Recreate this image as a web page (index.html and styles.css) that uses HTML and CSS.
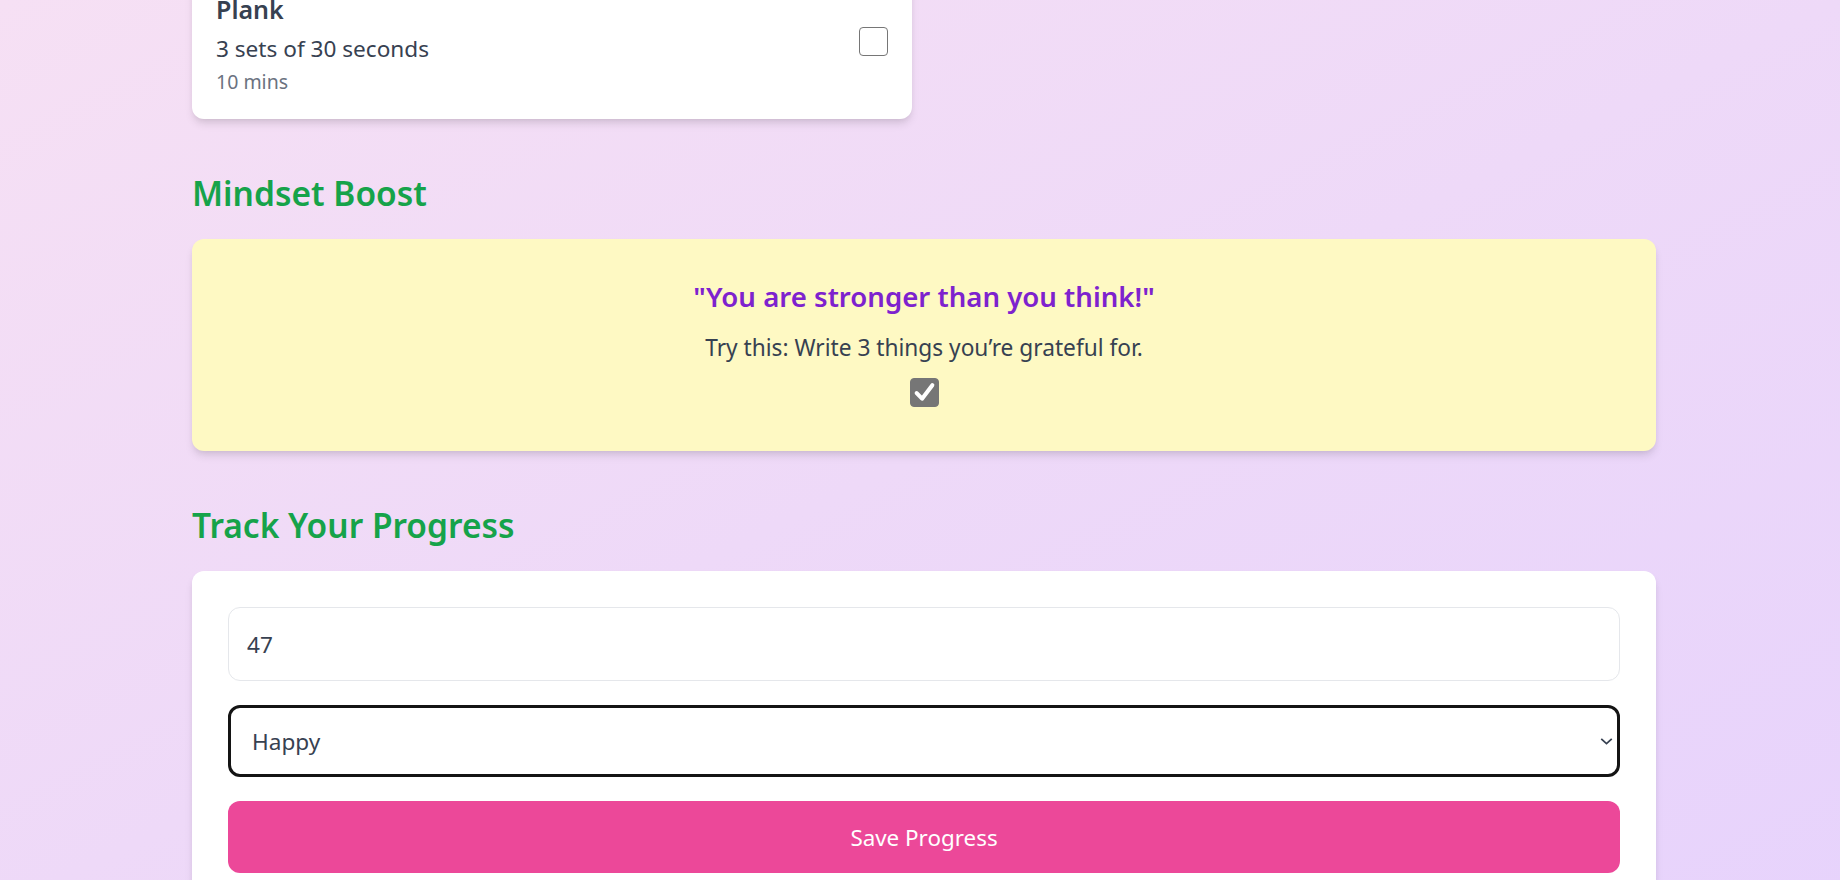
FILE: index.html
```html
<!DOCTYPE html>
<html lang="en">
<head>
<meta charset="utf-8">
<title>Wellness Tracker</title>
<link rel="stylesheet" href="styles.css">
</head>
<body>
<main class="container">
  <section class="exercises">
    <div class="exercise-card">
      <div class="exercise-info">
        <h3 class="exercise-title">Plank</h3>
        <p class="exercise-detail">3 sets of 30 seconds</p>
        <p class="exercise-time">10 mins</p>
      </div>
      <input type="checkbox" class="check exercise-check" aria-label="Done">
    </div>
  </section>

  <section class="section">
    <h2 class="section-title">Mindset Boost</h2>
    <div class="mindset-card">
      <p class="quote">"You are stronger than you think!"</p>
      <p class="tip">Try this: Write 3 things you’re grateful for.</p>
      <input type="checkbox" class="check mindset-check" checked aria-label="Done">
    </div>
  </section>

  <section class="section">
    <h2 class="section-title">Track Your Progress</h2>
    <form class="progress-card">
      <input type="number" class="field field-input" value="47">
      <select class="field field-select">
        <option>Happy</option>
        <option>Calm</option>
        <option>Tired</option>
        <option>Stressed</option>
      </select>
      <button type="button" class="save-btn">Save Progress</button>
    </form>
  </section>
</main>
</body>
</html>
```
FILE: styles.css
```css
html {
  overflow: hidden;
}

body {
  margin: 0;
  min-height: 100vh;
  background: linear-gradient(to bottom right, #f6e0f4 0%, #eed9f8 50%, #e7d3fc 100%);
  font-family: "Noto Sans", "Open Sans", sans-serif;
  color: #374151;
}

.container {
  width: 1464px;
  margin: 0 184px 0 192px;
}

.exercises {
  display: grid;
  grid-template-columns: 1fr 1fr;
  gap: 24px;
  margin-top: -32px;
}

.exercise-card {
  background: #ffffff;
  border-radius: 12px;
  padding: 24px 24px 23px;
  display: flex;
  align-items: center;
  justify-content: space-between;
  box-shadow: 0 6px 9px -1.5px rgba(0, 0, 0, 0.1), 0 3px 6px -3px rgba(0, 0, 0, 0.1);
}

.exercise-title {
  margin: 0 0 7px;
  font-size: 25px;
  line-height: 34px;
  font-weight: 600;
  color: #374151;
}

.exercise-detail {
  margin: 0;
  font-size: 22.6px;
  line-height: 32px;
  color: #374151;
}

.exercise-time {
  margin: 3px 0 0;
  font-size: 19.5px;
  line-height: 28px;
  color: #6b7280;
}

.check {
  appearance: none;
  -webkit-appearance: none;
  width: 29px;
  height: 29px;
  margin: 0;
  border: 1.5px solid #767676;
  border-radius: 4px;
  background: #ffffff;
  flex-shrink: 0;
}

.exercise-check {
  margin-bottom: 5px;
}

.check:checked {
  border-color: #767676;
  background-color: #767676;
  background-image: url("data:image/svg+xml,%3Csvg xmlns='http://www.w3.org/2000/svg' viewBox='0 0 20 20'%3E%3Cpath d='M4.2 10.4 L8.2 14.6 L15.8 4.6' fill='none' stroke='white' stroke-width='3' stroke-linecap='round' stroke-linejoin='round'/%3E%3C/svg%3E");
  background-size: 100% 100%;
}

.section {
  margin-top: 54px;
}

.section-title {
  margin: 0 0 26px;
  font-size: 33.5px;
  line-height: 40px;
  font-weight: 600;
  color: #16a34a;
}

.mindset-card {
  background: #fef9c3;
  border-radius: 12px;
  padding: 40px 32px 44px;
  text-align: center;
  box-shadow: 0 6px 9px -1.5px rgba(0, 0, 0, 0.1), 0 3px 6px -3px rgba(0, 0, 0, 0.1);
}

.quote {
  margin: 0;
  font-size: 27.6px;
  line-height: 34px;
  font-weight: 600;
  color: #7e22ce;
}

.tip {
  margin: 19px 0 0;
  font-size: 22.7px;
  line-height: 32px;
  color: #374151;
}

.mindset-check {
  display: block;
  margin: 14px auto 0;
}

.progress-card {
  background: #ffffff;
  border-radius: 12px;
  padding: 36px;
  display: flex;
  flex-direction: column;
  gap: 24px;
  box-shadow: 0 6px 9px -1.5px rgba(0, 0, 0, 0.1), 0 3px 6px -3px rgba(0, 0, 0, 0.1);
}

.field {
  box-sizing: border-box;
  width: 100%;
  margin: 0;
  font-family: inherit;
  font-size: 22.6px;
  color: #374151;
  background: #ffffff;
  border-radius: 12px;
  outline: none;
}

.field-input {
  height: 74px;
  padding: 0 18px;
  border: 1.5px solid #e5e7eb;
}

.field-select {
  appearance: none;
  -webkit-appearance: none;
  height: 72px;
  padding: 0 40px 0 21px;
  border: 3px solid #141414;
  background-image: url("data:image/svg+xml,%3Csvg xmlns='http://www.w3.org/2000/svg' viewBox='0 0 14 8'%3E%3Cpath d='M1 1 L7 6.5 L13 1' fill='none' stroke='%23374151' stroke-width='2'/%3E%3C/svg%3E");
  background-repeat: no-repeat;
  background-size: 13px 7px;
  background-position: right 4px center;
}

.save-btn {
  height: 72px;
  border: none;
  border-radius: 12px;
  background: #ec4899;
  color: #ffffff;
  font-family: inherit;
  font-size: 22.4px;
}
```
